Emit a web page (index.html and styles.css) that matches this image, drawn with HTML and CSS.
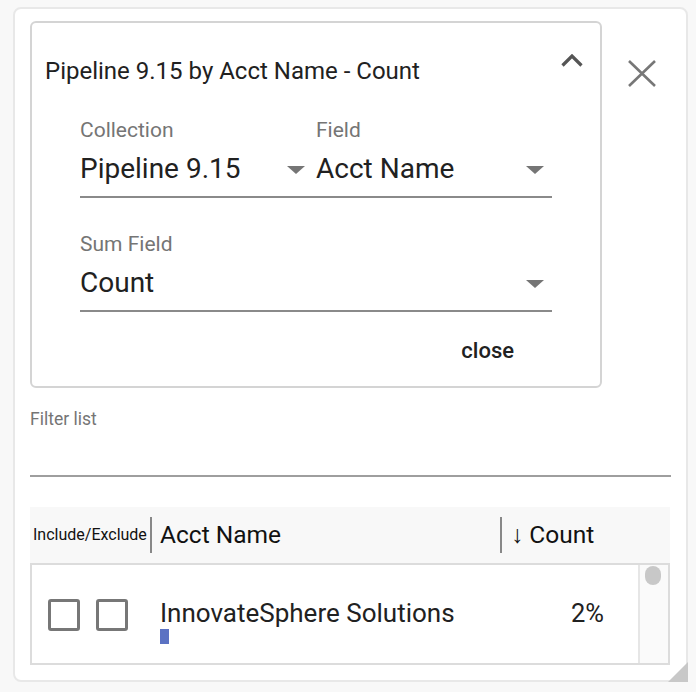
FILE: index.html
```html
<!DOCTYPE html>
<html>
<head>
<meta charset="utf-8">
<link rel="stylesheet" href="styles.css">
</head>
<body>
<div class="panel">
  <div class="top">
    <div class="card">
      <div class="card-head">
        <div class="title">Pipeline 9.15 by Acct Name - Count</div>
        <svg class="chev" width="22" height="13" viewBox="0 0 22 13"><path d="M1.5 11.5 L11 2 L20.5 11.5" fill="none" stroke="#555" stroke-width="3.2"/></svg>
      </div>
      <div class="fields">
        <div class="row">
          <div class="fld c1">
            <div class="lbl">Collection</div>
            <div class="val"><span>Pipeline 9.15</span><span class="arrow"></span></div>
          </div>
          <div class="fld c2">
            <div class="lbl">Field</div>
            <div class="val"><span>Acct Name</span><span class="arrow"></span></div>
          </div>
        </div>
        <div class="row">
          <div class="fld wide">
            <div class="lbl">Sum Field</div>
            <div class="val"><span>Count</span><span class="arrow"></span></div>
          </div>
        </div>
      </div>
      <div class="actions"><span class="closebtn">close</span></div>
    </div>
    <svg class="x" width="28" height="27" viewBox="0 0 28 27"><path d="M1 1 L27 26 M27 1 L1 26" stroke="#777" stroke-width="2.6" fill="none"/></svg>
  </div>
  <div class="filter">
    <div class="flbl">Filter list</div>
    <div class="finput"></div>
  </div>
  <div class="table">
    <div class="thead">
      <div class="th inc">Include/Exclude</div>
      <div class="th name">Acct Name</div>
      <div class="th cnt">↓ Count</div>
    </div>
    <div class="tbody">
      <div class="trow">
        <div class="checks"><span class="cb"></span><span class="cb"></span></div>
        <div class="namecell">
          <div class="nm">InnovateSphere Solutions</div>
          <div class="bar" style="width:9px"></div>
        </div>
        <div class="pct">2%</div>
      </div>
      <div class="scroll"><div class="thumb"></div></div>
    </div>
  </div>
  <div class="grip"></div>
</div>
</body>
</html>
```
FILE: styles.css
```css
* { box-sizing: border-box; }
html, body { margin: 0; padding: 0; }
body {
  background: #f8f8f8;
  font-family: Roboto, "Liberation Sans", sans-serif;
  color: #212121;
  width: 696px;
  height: 692px;
  overflow: hidden;
}
.panel {
  position: relative;
  margin: 7px 0 0 13px;
  width: 675px;
  height: 675px;
  background: #fff;
  border: 2px solid #e8e8e8;
  border-radius: 8px;
  padding: 12px 0 0 15px;
}
.top { display: flex; align-items: flex-start; }
.card {
  width: 572px;
  height: 367px;
  border: 2px solid #d4d4d4;
  border-radius: 6px;
  padding: 0 0 0 13px;
  display: flex;
  flex-direction: column;
}
.card-head {
  display: flex;
  align-items: flex-start;
  justify-content: space-between;
  padding: 34px 17px 0 0;
  height: 95px;
}
.title { font-size: 24px; line-height: 28px; color: #212121; }
.chev { margin-top: -3px; }
.fields { padding-left: 35px; width: 507px; }
.row { display: flex; border-bottom: 2px solid #8a8a8a; margin-bottom: 34px; }
.fld { width: 236px; }
.fld.wide { width: 472px; }
.fld.c1 .val { padding-right: 11px; }
.fld.c2 .val, .fld.wide .val { padding-right: 8px; }
.lbl { font-size: 21px; color: #757575; line-height: 24px; height: 33px; }
.val {
  display: flex; justify-content: space-between; align-items: flex-start;
  font-size: 28px; line-height: 36px; height: 45px;
  color: #212121;
}
.arrow {
  margin-top: 15px;
  width: 0; height: 0;
  border-left: 9px solid transparent;
  border-right: 9px solid transparent;
  border-top: 8px solid #757575;
}
.actions { display: flex; justify-content: flex-end; padding-right: 86px; margin-top: -7px; }
.closebtn { font-size: 22px; font-weight: 500; color: #212121; line-height: 24px; }
.x { margin: 39px 0 0 26px; }
.filter { padding-top: 21px; width: 641px; }
.flbl { font-size: 17.5px; color: #757575; line-height: 20px; height: 66px; }
.finput { border-bottom: 2px solid #9e9e9e; }
.table { margin-top: 30px; width: 640px; }
.thead {
  display: flex; align-items: center; height: 56px; background: #f8f8f8;
}
.th { font-size: 24.5px; color: #111; height: 36px; line-height: 36px; }
.th.inc { font-size: 16px; width: 122px; padding-left: 3px; border-right: 2px solid #888; }
.th.name { width: 350px; padding-left: 8px; border-right: 2px solid #888; }
.th.cnt { padding-left: 9px; }
.tbody {
  display: flex; height: 102px; border: 2px solid #dcdcdc;
}
.trow { flex: 1; display: flex; align-items: flex-start; }
.checks { display: flex; gap: 16px; padding: 34px 0 0 16px; width: 128px; }
.cb { width: 32px; height: 32px; border: 3px solid #777; border-radius: 3px; }
.namecell { padding-top: 33px; flex: 1; }
.nm { font-size: 26px; line-height: 30px; }
.bar { height: 15px; background: #5b72c3; margin-top: 1px; }
.pct { font-size: 25.5px; line-height: 30px; padding-top: 33px; padding-right: 34px; }
.scroll { width: 30px; border-left: 2px solid #e6e6e6; background: #fafafa; padding: 1px 0 0 5px; }
.thumb { width: 16px; height: 19px; background: #c8c8c8; border-radius: 8px; }
.grip {
  position: absolute; right: -2px; bottom: -2px;
  width: 0; height: 0;
  border-left: 20px solid transparent;
  border-bottom: 20px solid #c8c8c8;
}
```
